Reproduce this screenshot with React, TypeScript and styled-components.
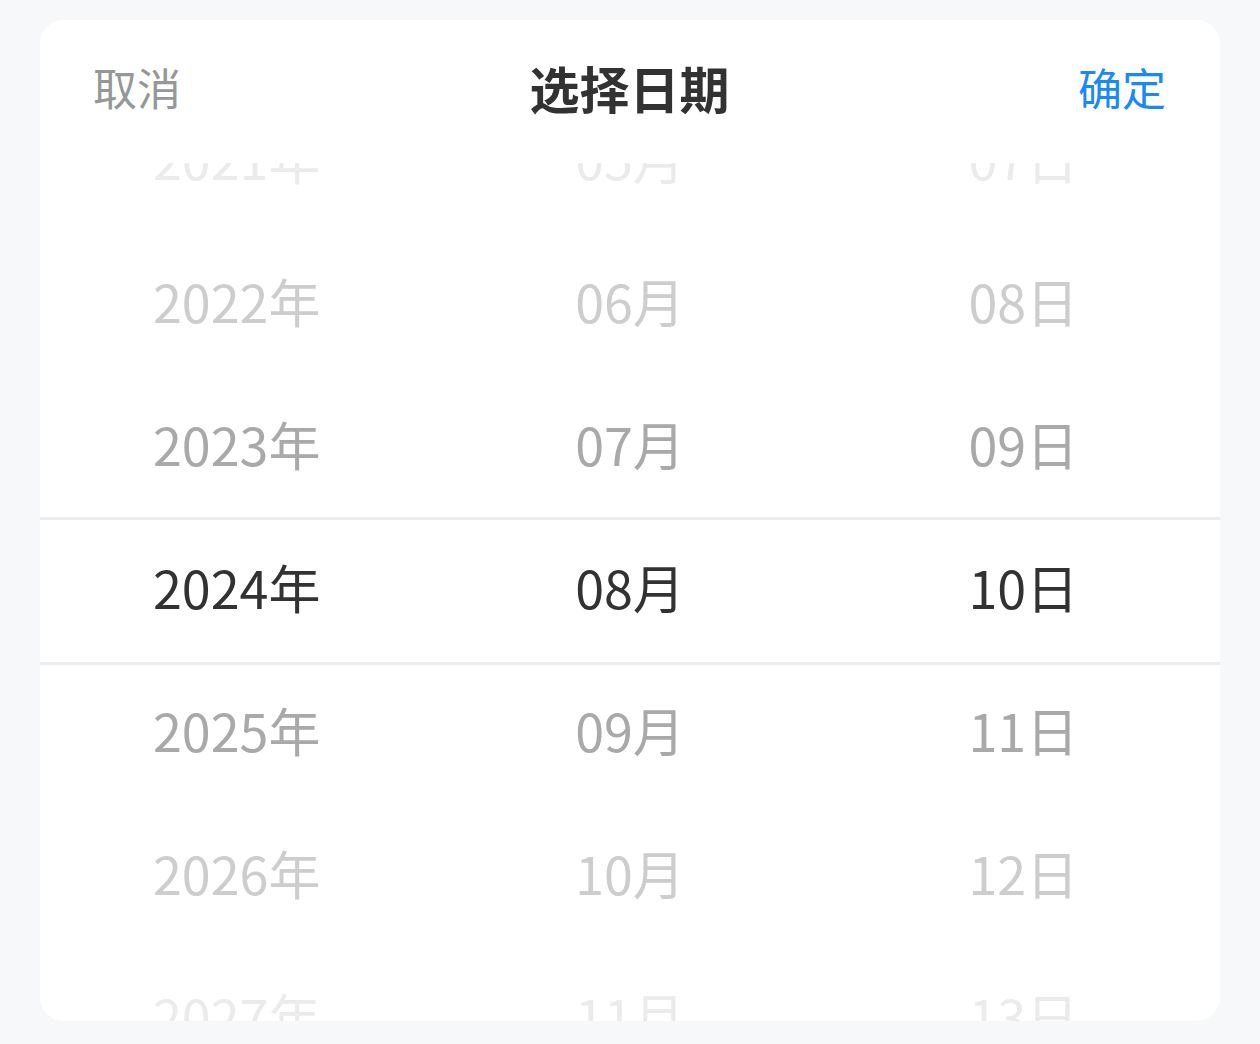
import React from "react";
import styled, { createGlobalStyle } from "styled-components";

const GlobalStyle = createGlobalStyle`
  html, body {
    margin: 0;
    padding: 0;
    background: #f7f8fa;
    font-family: "Noto Sans CJK SC", "Noto Sans", sans-serif;
  }
`;

const Page = styled.div`
  padding: 20px 40px 24px;
  box-sizing: border-box;
  width: 1260px;
`;

const Card = styled.div`
  background: #ffffff;
  border-radius: 24px;
  height: 1001px;
  overflow: hidden;
  display: flex;
  flex-direction: column;
`;

const Header = styled.div`
  height: 143px;
  box-sizing: border-box;
  flex: none;
  display: flex;
  align-items: center;
  justify-content: space-between;
  padding: 0 54px 10px 53px;
`;

const HeaderButton = styled.span<{ $primary?: boolean }>`
  font-size: 44px;
  line-height: 1;
  color: ${(p) => (p.$primary ? "#1989fa" : "#969799")};
`;

const Title = styled.span`
  font-size: 50px;
  font-weight: 700;
  line-height: 1;
  color: #323233;
`;

const Picker = styled.div`
  position: relative;
  flex: 1;
  overflow: hidden;
  display: grid;
  grid-template-columns: 1fr 1fr 1fr;
`;

const Column = styled.div`
  display: flex;
  flex-direction: column;
  margin-top: -77px;
`;

const Option = styled.div<{ $dist: number }>`
  height: 143px;
  flex: none;
  display: flex;
  align-items: center;
  justify-content: center;
  font-size: 52px;
  line-height: 1;
  color: ${(p) =>
    p.$dist === 0 ? "#323233" : p.$dist === 1 ? "#a9a9aa" : p.$dist === 2 ? "#cdcdce" : "#ebebec"};
`;

const Frame = styled.div`
  position: absolute;
  left: 0;
  right: 0;
  top: 354px;
  height: 148px;
  box-sizing: border-box;
  border-top: 3px solid #ebedf0;
  border-bottom: 3px solid #ebedf0;
  pointer-events: none;
`;

const pad = (n: number) => String(n).padStart(2, "0");

const columns: string[][] = [
  [2021, 2022, 2023, 2024, 2025, 2026, 2027].map((y) => `${y}年`),
  [5, 6, 7, 8, 9, 10, 11].map((m) => `${pad(m)}月`),
  [7, 8, 9, 10, 11, 12, 13].map((d) => `${pad(d)}日`),
];

export default function App() {
  return (
    <>
      <GlobalStyle />
      <Page>
        <Card>
          <Header>
            <HeaderButton>取消</HeaderButton>
            <Title>选择日期</Title>
            <HeaderButton $primary>确定</HeaderButton>
          </Header>
          <Picker>
            {columns.map((col, ci) => (
              <Column key={ci}>
                {col.map((label, i) => (
                  <Option key={label} $dist={Math.abs(i - 3)}>
                    {label}
                  </Option>
                ))}
              </Column>
            ))}
            <Frame />
          </Picker>
        </Card>
      </Page>
    </>
  );
}
